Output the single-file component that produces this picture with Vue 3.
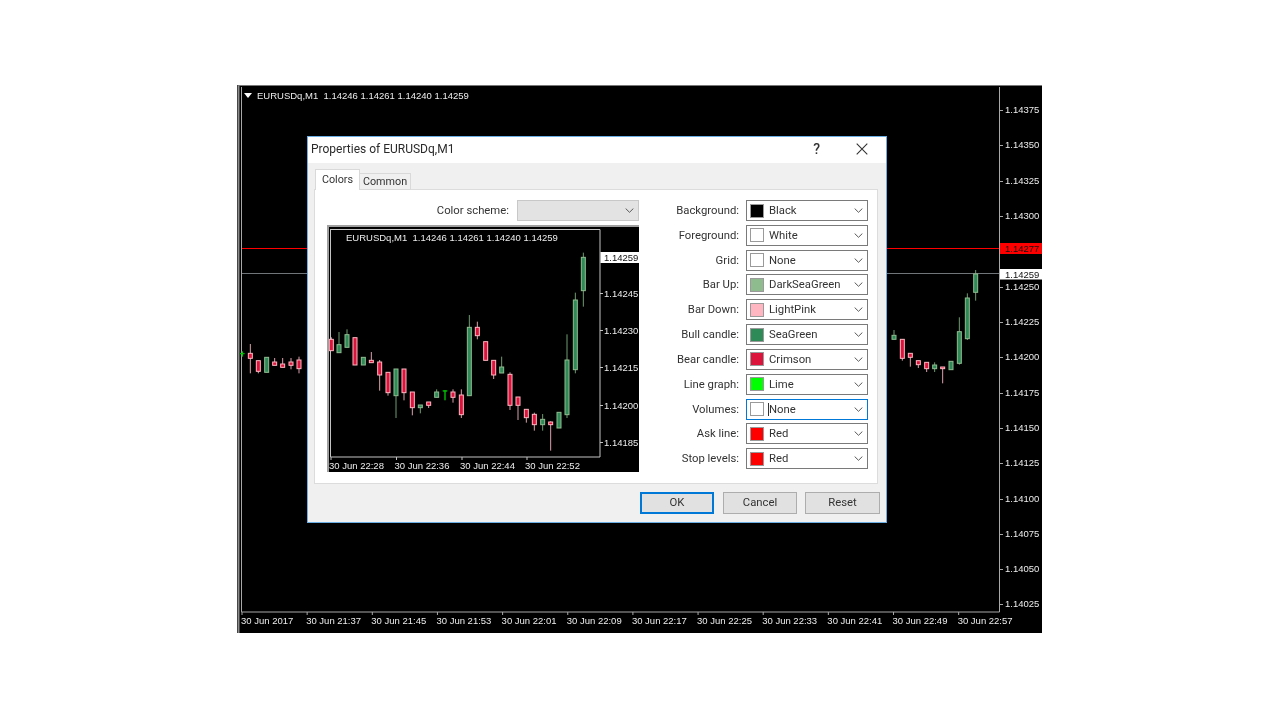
<script setup>
const toPage = (ox, oy, xs) => xs.map(([k, x, t, b, wt, wb]) => ({
  k,
  x: ox + x / 3,
  t: oy + t / 3,
  b: oy + b / 3,
  wt: oy + (wt ?? t) / 3,
  wb: oy + (wb ?? b) / 3,
}))

const miniCandles = toPage(320, 220, [
  ['bear', 34, 358, 392, 352, 392], ['bull', 57, 374, 398, 336, 398], ['bull', 81, 344, 382, 328, 382],
  ['bear', 105, 353, 435], ['bull', 130, 412, 435], ['bear', 154, 421, 428, 396, 428],
  ['bear', 179, 426, 465, 420, 512], ['bear', 204, 457, 518, 457, 527], ['bull', 228, 447, 527, 447, 594],
  ['bear', 252, 447, 518, 447, 541], ['bear', 277, 516, 563, 516, 586], ['bull', 301, 555, 563, 555, 580],
  ['bear', 326, 546, 556, 546, 564], ['bull', 350, 516, 532, 508, 532], ['lime', 375, 512, 514, 510, 541],
  ['bear', 399, 516, 532, 508, 548], ['bear', 424, 525, 584, 508, 594], ['bull', 448, 322, 527, 285, 527],
  ['bear', 472, 322, 347, 305, 358], ['bear', 497, 365, 421], ['bear', 521, 421, 465, 421, 477],
  ['bull', 545, 441, 459, 410, 459], ['bear', 570, 463, 556, 457, 570], ['bear', 594, 531, 556, 531, 600],
  ['bear', 619, 568, 593, 568, 608], ['bear', 643, 583, 614, 578, 632], ['bull', 668, 598, 614, 582, 632],
  ['bear', 692, 606, 614, 604, 692], ['bull', 717, 577, 624], ['bull', 741, 420, 584, 343, 594],
  ['bull', 766, 240, 449, 218, 460], ['bull', 790, 112, 212, 98, 260],
])

const mainCandles = [
  ...toPage(232, 330, [
    ['lime', 31, 70, 72, 64, 80], ['bear', 55, 70, 85, 42, 130], ['bear', 79, 92, 124, 92, 130],
    ['bull', 104, 82, 127], ['bear', 128, 96, 106, 84, 106], ['bear', 152, 102, 112, 84, 112],
    ['bear', 177, 96, 106, 84, 118], ['bear', 201, 90, 116, 80, 130],
  ]),
  ...toPage(880, 230, [
    ['bull', 42, 316, 328, 300, 328], ['bear', 67, 328, 385, 328, 392], ['bear', 91, 370, 382, 370, 410],
    ['bear', 115, 392, 404, 392, 414], ['bear', 140, 397, 416, 397, 426], ['bull', 164, 405, 416, 397, 426],
    ['bear', 188, 411, 416, 411, 460], ['bull', 213, 394, 419], ['bull', 238, 305, 400, 262, 404],
    ['bull', 262, 204, 326, 190, 330], ['bull', 287, 132, 187, 120, 212],
  ]),
]

const mainPrices = [
  ['1.14375', 110], ['1.14350', 145], ['1.14325', 181], ['1.14300', 216], ['1.14250', 287],
  ['1.14225', 322], ['1.14200', 357], ['1.14175', 393], ['1.14150', 428], ['1.14125', 463],
  ['1.14100', 499], ['1.14075', 534], ['1.14050', 569], ['1.14025', 604],
]
const mainTimes = ['30 Jun 2017', '30 Jun 21:37', '30 Jun 21:45', '30 Jun 21:53', '30 Jun 22:01', '30 Jun 22:09',
  '30 Jun 22:17', '30 Jun 22:25', '30 Jun 22:33', '30 Jun 22:41', '30 Jun 22:49', '30 Jun 22:57']
  .map((label, i) => ({ label, x: 241 + i * 65.15 }))

const miniPrices = [['1.14245', 293], ['1.14230', 330], ['1.14215', 367], ['1.14200', 405], ['1.14185', 442]]
const miniTimes = [['30 Jun 22:28', 329], ['30 Jun 22:36', 394.5], ['30 Jun 22:44', 460], ['30 Jun 22:52', 525]]

const rows = [
  { label: 'Background:', name: 'Black', color: '#000000' },
  { label: 'Foreground:', name: 'White', color: '#ffffff' },
  { label: 'Grid:', name: 'None', color: '#ffffff' },
  { label: 'Bar Up:', name: 'DarkSeaGreen', color: '#8fbc8f' },
  { label: 'Bar Down:', name: 'LightPink', color: '#ffb6c1' },
  { label: 'Bull candle:', name: 'SeaGreen', color: '#2e8b57' },
  { label: 'Bear candle:', name: 'Crimson', color: '#dc143c' },
  { label: 'Line graph:', name: 'Lime', color: '#00ff00' },
  { label: 'Volumes:', name: 'None', color: '#ffffff', focus: true },
  { label: 'Ask line:', name: 'Red', color: '#ff0000' },
  { label: 'Stop levels:', name: 'Red', color: '#ff0000' },
]
</script>

<template>
  <div class="page">
    <div class="window">
      <svg class="chart" viewBox="237 85 805 548" width="805" height="548">
        <rect x="237" y="85" width="805" height="548" fill="#000" />
        <path d="M238.5 85V633" stroke="#8c8c8c" stroke-width="2" />
        <path d="M238 85.5H1042" stroke="#777" />
        <path d="M241.5 87V612H999.5V87" fill="none" stroke="#a8a8a8" />
        <polygon points="244,93 252,93 248,98" fill="#fff" />
        <text x="257" y="99.2" class="mt">EURUSDq,M1&#160; 1.14246 1.14261 1.14240 1.14259</text>
        <path d="M242 248.5H999" stroke="#f00" />
        <path d="M242 273.5H999" stroke="#70757a" />
        <g v-for="c in mainCandles" :key="c.x">
          <path :d="`M${c.x} ${c.wt}V${c.wb}`" :class="`w-${c.k}`" />
          <rect :x="c.x - 2" :y="c.t" width="4" :height="c.b - c.t" :class="`b-${c.k}`" />
        </g>
        <g v-for="p in mainPrices" :key="p[0]">
          <path :d="`M999 ${p[1]}.5h4`" stroke="#a8a8a8" />
          <text x="1005" :y="p[1] + 3.2" class="mt">{{ p[0] }}</text>
        </g>
        <rect x="1000" y="243" width="42" height="11" fill="#f00" />
        <text x="1005" y="252" class="mt dark">1.14277</text>
        <rect x="1000" y="269" width="42" height="10.5" fill="#fff" />
        <text x="1005" y="277.5" class="mt dark">1.14259</text>
        <g v-for="t in mainTimes" :key="t.label">
          <path :d="`M${t.x + 1} 612v3`" stroke="#a8a8a8" />
          <text :x="t.x" y="624" class="mt">{{ t.label }}</text>
        </g>
      </svg>

      <div class="dialog">
        <div class="titlebar">
          <span class="title">Properties of EURUSDq,M1</span>
          <span class="help">?</span>
          <svg class="close" width="12" height="12" viewBox="0 0 12 12">
            <path d="M.7.7l10.6 10.6M11.3.7L.7 11.3" stroke="#333" stroke-width="1.1" fill="none" />
          </svg>
        </div>
        <div class="body">
          <div class="tabs">
            <span class="tab active">Colors</span>
            <span class="tab">Common</span>
          </div>
          <div class="panel">
            <div class="left">
              <div class="scheme">
                <span class="lbl">Color scheme:</span>
                <div class="combo disabled">
                  <svg class="chev" width="9" height="5" viewBox="0 0 11 6"><path d="M.8.6l4.7 4.6L10.2.6" /></svg>
                </div>
              </div>
              <div class="preview">
                <svg viewBox="329 227 310 245" width="310" height="245" class="mini">
                  <rect x="329" y="227" width="310" height="245" fill="#000" />
                  <path d="M330 229.5H600V457H330.5V229" fill="none" stroke="#c4c4c4" />
                  <text x="346" y="240.7" class="mt">EURUSDq,M1&#160; 1.14246 1.14261 1.14240 1.14259</text>
                  <g v-for="c in miniCandles" :key="c.x">
                    <path :d="`M${c.x} ${c.wt}V${c.wb}`" :class="`w-${c.k}`" />
                    <rect :x="c.x - 2" :y="c.t" width="4" :height="c.b - c.t" :class="`b-${c.k}`" />
                  </g>
                  <rect x="600.5" y="252" width="38.5" height="11" fill="#fff" />
                  <text x="604" y="261" class="mt dark">1.14259</text>
                  <g v-for="p in miniPrices" :key="p[0]">
                    <path :d="`M600 ${p[1]}.5h3`" stroke="#c4c4c4" />
                    <text x="604" :y="p[1] + 3.5" class="mt">{{ p[0] }}</text>
                  </g>
                  <g v-for="t in miniTimes" :key="t[0]">
                    <path :d="`M${t[1] + 2} 457v3`" stroke="#c4c4c4" />
                    <text :x="t[1]" y="468.5" class="mt">{{ t[0] }}</text>
                  </g>
                </svg>
              </div>
            </div>
            <div class="right">
              <template v-for="r in rows" :key="r.label">
                <span class="lbl">{{ r.label }}</span>
                <div class="combo" :class="{ focus: r.focus }">
                  <i class="swatch" :style="{ background: r.color }"></i>
                  <span class="name" :class="{ caret: r.focus }">{{ r.name }}</span>
                  <svg class="chev" width="9" height="5" viewBox="0 0 11 6"><path d="M.8.6l4.7 4.6L10.2.6" /></svg>
                </div>
              </template>
            </div>
          </div>
          <div class="buttons">
            <span class="btn default">OK</span>
            <span class="btn cancel">Cancel</span>
            <span class="btn reset">Reset</span>
          </div>
        </div>
      </div>
    </div>
  </div>
</template>

<style>
html, body { background: #fff; }
</style>

<style scoped>
.page {
  width: 1280px;
  height: 720px;
  padding: 85px 0 0 237px;
  box-sizing: border-box;
  overflow: hidden;
}
.window {
  position: relative;
  width: 805px;
  height: 548px;
  background: #000;
  filter: blur(0.3px);
}
.chart { display: block; }
.mt {
  font: 9.5px "Liberation Sans", sans-serif;
  fill: #ececec;
}
.mt.dark { fill: #111; }
.w-bull { stroke: #6f9c70; stroke-width: 1; }
.w-bear { stroke: #d9a0aa; stroke-width: 1; }
.w-lime { stroke: #00c000; stroke-width: 1.4; }
.b-bull { fill: #2e8b57; stroke: #8fbc8f; stroke-width: 1; }
.b-bear { fill: #dc143c; stroke: #ffb6c1; stroke-width: 1; }
.b-lime { fill: #00c000; stroke: #00c000; stroke-width: 0.5; }

.dialog {
  position: absolute;
  left: 70px;
  top: 51px;
  width: 580px;
  height: 387px;
  box-sizing: border-box;
  border: 1px solid #6aaee3;
  background: #f0f0f0;
  display: flex;
  flex-direction: column;
  font: 11.3px Roboto, "Liberation Sans", sans-serif;
  color: #333;
}
.titlebar {
  height: 26px;
  flex: none;
  box-sizing: border-box;
  background: #fff;
  display: flex;
  align-items: center;
  padding: 0 18px 2px 3px;
}
.title { font-size: 12px; color: #2a2a2a; flex: 1; }
.help { font-size: 14px; margin-right: 36px; font-weight: 500; }
.body {
  flex: 1;
  display: flex;
  flex-direction: column;
  padding: 7px 6px 0 6px;
}
.tabs {
  display: flex;
  align-items: flex-end;
  height: 20px;
  padding-left: 1px;
  position: relative;
  z-index: 1;
  margin-bottom: -1px;
}
.tab {
  height: 17px;
  width: 51px;
  box-sizing: border-box;
  border: 1px solid #d9d9d9;
  border-left: 0;
  background: #f0f0f0;
  text-align: center;
  line-height: 16px;
  font-size: 10.8px;
}
.tab.active {
  width: 45px;
  height: 21px;
  background: #fff;
  border-left: 1px solid #d9d9d9;
  border-bottom: 0;
  line-height: 19px;
}
.panel {
  height: 295px;
  margin-right: 2px;
  box-sizing: border-box;
  border: 1px solid #dcdcdc;
  background: #fff;
  display: flex;
  justify-content: space-between;
  padding: 10px 9px 0 12px;
}
.left { width: 312px; }
.scheme {
  display: flex;
  justify-content: flex-end;
  align-items: center;
  gap: 8px;
  height: 21px;
}
.scheme .combo { width: 122px; height: 21px; }
.preview {
  margin-top: 4px;
  border-top: 2px solid #a0a0a0;
  border-left: 2px solid #a0a0a0;
  height: 245px;
}
.mini { display: block; }
.right {
  display: grid;
  grid-template-columns: 90px 122px;
  grid-auto-rows: 21px;
  row-gap: 3.83px;
  column-gap: 7px;
  align-items: center;
}
.lbl { text-align: right; color: #333; }
.combo {
  height: 21px;
  box-sizing: border-box;
  border: 1px solid #7a7a7a;
  background: #fff;
  display: flex;
  align-items: center;
  padding: 0 3px;
  position: relative;
}
.combo.disabled {
  background: #e3e3e3;
  border-color: #c8c8c8;
}
.combo.focus { border-color: #0078d7; }
.swatch {
  width: 14px;
  height: 14px;
  box-sizing: border-box;
  border: 1px solid #9a9a9a;
  flex: none;
}
.name { margin-left: 5px; }
.caret { box-shadow: -1px 0 0 #333; }
.chev {
  position: absolute;
  right: 4px;
  top: 7px;
  fill: none;
  stroke: #555;
  stroke-width: 1.2;
}
.buttons {
  display: flex;
  justify-content: flex-end;
  margin-top: 8px;
}
.btn {
  width: 74px;
  height: 22px;
  box-sizing: border-box;
  border: 1px solid #adadad;
  background: #e1e1e1;
  text-align: center;
  line-height: 20px;
  color: #333;
}
.cancel { margin-left: 9px; }
.reset { margin-left: 8px; width: 75px; }
.btn.default {
  border: 2px solid #0078d7;
  line-height: 18px;
}
</style>
